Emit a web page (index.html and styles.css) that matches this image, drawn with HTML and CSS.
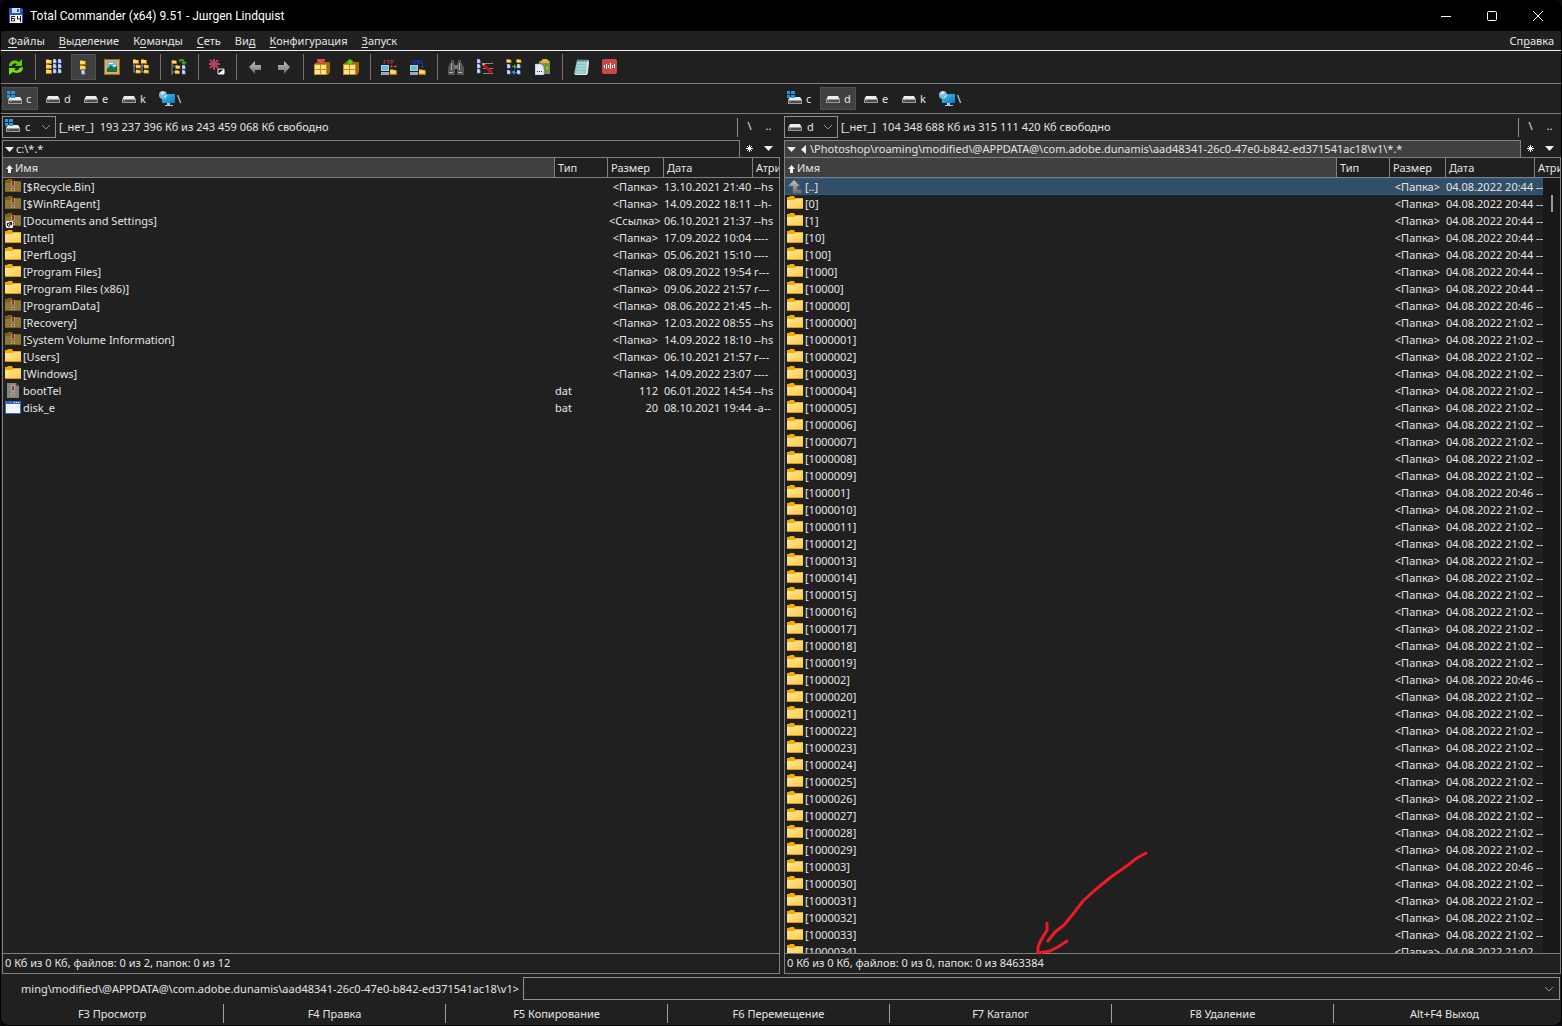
FILE: index.html
```html
<!DOCTYPE html>
<html lang="ru">

<head>
    <meta charset="UTF-8">
    <title>Total Commander (x64) 9.51</title>
    <link rel="stylesheet" href="styles.css">
</head>

<body>
    <!-- icon set -->
    <svg class="sprite" width="0" height="0">
        <defs>
            <linearGradient id="gFolder" x1="0" y1="0" x2="1" y2="1">
                <stop offset="0" stop-color="#ffe9a0" />
                <stop offset="1" stop-color="#ffc83c" />
            </linearGradient>
            <linearGradient id="gGrey" x1="0" y1="0" x2="0" y2="1">
                <stop offset="0" stop-color="#c4c4c4" />
                <stop offset="1" stop-color="#6a6a6a" />
            </linearGradient>
            <linearGradient id="gScreen" x1="0" y1="0" x2="1" y2="1">
                <stop offset="0" stop-color="#35c8f0" />
                <stop offset="1" stop-color="#0a78c0" />
            </linearGradient>
        </defs>
        <symbol id="folder" viewBox="0 0 16 16">
            <path d="M0 1h2l1-1h4l1 2h8v11H0z" fill="#f5ab00" />
            <path d="M0 4h7l2-1h7v10H0z" fill="url(#gFolder)" />
            <path d="M0 12h16v1H0z" fill="#d99a10" />
        </symbol>
        <symbol id="hidden" viewBox="0 0 16 16">
            <path d="M0 1h2l1-1h4l1 2h8v11H0z" fill="#82600f" />
            <path d="M0 4h7l2-1h7v9H0z" fill="#8d7838" />
            <path d="M6 2h4v5L9 8H7L6 7zM6 9h4v3H6z" fill="#a99a80" />
            <path d="M7 2h2v4L8 8 7 6zM7 10h2v1H7z" fill="#a02c22" />
        </symbol>
        <symbol id="link" viewBox="0 0 16 16">
            <use href="#hidden" />
            <path d="M1 8h7v7H1z" fill="#e4e4e4" />
            <path d="M2 13v-3h2v1H3v2zM4 9h3v3H6v-1l-2 3H3l2-4H4z" fill="#222" />
        </symbol>
        <symbol id="dat" viewBox="0 0 16 16">
            <path d="M2 0h9l3 3v12H2z" fill="#858585" />
            <path d="M11 0v3h3z" fill="#4b4b4b" />
            <path d="M6 2h4v5L9 9H7L6 7zM6 10h4v3H6z" fill="#b4a8a4" />
            <path d="M7 3h2v4L8 8 7 7zM7 11h2v1H7z" fill="#a02c2c" />
        </symbol>
        <symbol id="bat" viewBox="0 0 16 16">
            <path d="M0 1h16v13H0z" fill="#3668c8" />
            <path d="M1 4h14v9H1z" fill="#f4f7ff" />
            <path d="M9 2h1v1H9zM11 2h1v1h-1zM13 2h1v1h-1z" fill="#fff" />
        </symbol>
        <symbol id="up" viewBox="0 0 16 16">
            <path d="M7 1l6 6h-3v4h4v3H6V7H1z" fill="url(#gGrey)" stroke="#777" stroke-width=".5" />
        </symbol>
        <symbol id="drive" viewBox="0 0 16 16">
            <path d="M3 5h10l2 4H1z" fill="#ededed" />
            <path d="M1 8h14v4H1z" fill="#999" />
            <path d="M2 9h12v2H2z" fill="#4c4c4c" />
            <path d="M3 9h1v1H3z" fill="#3ae85a" />
        </symbol>
        <symbol id="sysdrive" viewBox="0 0 16 16">
            <path d="M3 6h10l2 3H1z" fill="#ededed" />
            <path d="M1 9h14v4H1z" fill="#999" />
            <path d="M2 10h12v2H2z" fill="#4c4c4c" />
            <path d="M3 10h1v1H3z" fill="#3ae85a" />
            <path d="M0 0h3v3H0zM4 0h4v3H4zM0 4h3v3H0zM4 4h4v3H4z" fill="#1e9be8" />
        </symbol>
        <symbol id="net" viewBox="0 0 18 18">
            <path d="M4 4h13v9H4z" fill="url(#gScreen)" />
            <path d="M9 13h3v2H9zM7 15h8v1H7z" fill="#b8c8d0" />
            <circle cx="5" cy="5" r="4" fill="#78b8dc" />
            <path d="M2 3l3-2 2 2-3 2zM6 6l3-1-2 3z" fill="#c8e6f4" />
        </symbol>
        <symbol id="floppy" viewBox="0 0 16 16">
            <path d="M1 0h13l1 1v14H1z" fill="#2358c4" />
            <path d="M4 0h8v5H4z" fill="#cfdcf2" />
            <path d="M9 1h2v3H9z" fill="#2358c4" />
            <path d="M2 7h12v8H2z" fill="#f4f4f4" />
            <path d="M7 8.500H3.500v4.500h3v-2.500h-3M9.500 8v3h3M12.500 8v6" fill="none" stroke="#222" />
        </symbol>
        <!-- blue document and small folder, building blocks of the toolbar -->
        <symbol id="doc" viewBox="0 0 5 6">
            <path d="M0 0h3l1 2v3H0z" fill="#cddaff" stroke="#6e8ae0" stroke-width=".7" />
        </symbol>
        <symbol id="fold" viewBox="0 0 6 5">
            <path d="M0 0h3v1h3v4H0z" fill="#b07c10" />
            <path d="M0 1h5v3H0z" fill="#ffd968" />
        </symbol>
        <symbol id="refresh" viewBox="0 0 16 16">
            <path d="M1 7c0-5 6-7 10-4l3-3v7H7l2-2C6 4 4 5 4 7z" fill="#5ccc0c" />
            <path d="M15 8c0 6-6 7-10 5l-4 3V9h7l-2 2c3 1 5 0 5-2z" fill="#79e010" />
        </symbol>
        <symbol id="brief" viewBox="0 0 16 16">
            <use href="#fold" x="0" y="0" width="6" height="5" />
            <use href="#fold" x="0" y="5" width="6" height="5" />
            <use href="#fold" x="0" y="10" width="6" height="5" />
            <use href="#doc" x="7" y="0" width="4" height="5" />
            <use href="#doc" x="7" y="5" width="4" height="5" />
            <use href="#doc" x="7" y="10" width="4" height="5" />
            <use href="#doc" x="12" y="0" width="4" height="5" />
            <use href="#doc" x="12" y="5" width="4" height="5" />
            <use href="#doc" x="12" y="10" width="4" height="5" />
        </symbol>
        <symbol id="full" viewBox="0 0 16 16">
            <use href="#fold" x="5" y="1" width="6" height="5" />
            <use href="#fold" x="5" y="6" width="6" height="5" />
            <use href="#doc" x="6" y="11" width="5" height="5" />
        </symbol>
        <symbol id="thumbs" viewBox="0 0 16 16">
            <path d="M0 0h16v16H0z" fill="#9a6c24" />
            <path d="M1 1h14v14H1z" fill="#dcae5c" />
            <path d="M3 3h10v10H3z" fill="#5fb8f0" />
            <path d="M3 10l4-4 3 3 3-2v6H3z" fill="#18703c" />
            <path d="M5 4h4v1H5zM9 6h3v1H9z" fill="#fff" />
        </symbol>
        <symbol id="tree" viewBox="0 0 16 16">
            <path d="M1 4v9h3M9 4v9h3M1 7h3M9 7h3" stroke="#999" fill="none" />
            <use href="#fold" x="0" y="0" width="6" height="5" />
            <use href="#fold" x="3" y="5" width="5" height="5" />
            <use href="#fold" x="3" y="10" width="5" height="5" />
            <use href="#fold" x="8" y="0" width="6" height="5" />
            <use href="#fold" x="11" y="5" width="5" height="5" />
            <use href="#fold" x="11" y="10" width="5" height="5" />
        </symbol>
        <symbol id="swap" viewBox="0 0 16 16">
            <path d="M1 1v15M1 7h3M1 13h3" stroke="#888" fill="none" />
            <use href="#fold" x="1" y="1" width="5" height="4" />
            <use href="#fold" x="4" y="6" width="6" height="4" />
            <use href="#fold" x="4" y="11" width="5" height="4" />
            <use href="#doc" x="11" y="6" width="4" height="5" />
            <use href="#doc" x="11" y="11" width="4" height="5" />
            <path d="M8 2c3-2 5-1 5 2" stroke="#38a820" stroke-width="2" fill="none" />
            <path d="M10 3h6l-3 3z" fill="#38a820" />
        </symbol>
        <symbol id="invert" viewBox="0 0 16 16">
            <path d="M5 0v11M0 5h11M1 1l8 8M9 1l-8 8" stroke="#b8405a" stroke-width="2" />
            <path d="M9 10h6v5H9z" fill="#111" stroke="#eee" />
            <path d="M15 10v5H9z" fill="#fff" />
        </symbol>
        <symbol id="back" viewBox="0 0 16 16">
            <path d="M2 8l6-6v4h6v5H8v4z" fill="url(#gGrey)" />
        </symbol>
        <symbol id="forward" viewBox="0 0 16 16">
            <path d="M14 8L8 2v4H2v5h6v4z" fill="url(#gGrey)" />
        </symbol>
        <symbol id="box" viewBox="0 0 16 16">
            <path d="M0 5l3-2h13v10l-2 3H0z" fill="#a06c08" />
            <path d="M0 5h13v11H0z" fill="#c88c18" />
            <path d="M1 6h5v4H1zM7 6h5v4H7zM1 11h5v4H1zM7 11h5v4H7z" fill="#ffe68c" />
        </symbol>
        <symbol id="pack" viewBox="0 0 16 16">
            <use href="#box" width="16" height="16" />
            <path d="M3 0h8v2L7 5 3 2z" fill="#e04858" />
        </symbol>
        <symbol id="unpack" viewBox="0 0 16 16">
            <use href="#box" width="16" height="16" />
            <path d="M7 0l4 3H9v2H5V3H3z" fill="#50d010" />
        </symbol>
        <symbol id="pc" viewBox="0 0 16 16">
            <path d="M0 6h8v6H0z" fill="#b8ccd8" />
            <path d="M1 7h6v4H1z" fill="#50c4ee" />
            <path d="M0 13h8v3H0z" fill="#a8a8c0" />
            <path d="M1 14h3v1H1z" fill="#4ad040" />
            <path d="M8 14h4" stroke="#a03030" />
            <use href="#fold" x="9" y="10" width="7" height="6" />
        </symbol>
        <symbol id="ftp" viewBox="0 0 16 16">
            <use href="#pc" width="16" height="16" />
            <text x="2" y="5" class="tiny" fill="#a83848">FTP</text>
            <path d="M9 7.500h7M10.500 6v3M14.500 6v3" stroke="#a83848" fill="none" />
        </symbol>
        <symbol id="url" viewBox="0 0 16 16">
            <use href="#pc" width="16" height="16" />
            <text x="2" y="5" class="tiny" fill="#1838c8">URL</text>
            <path d="M11 7.500h3M12.500 6v3" stroke="#1838c8" fill="none" />
        </symbol>
        <symbol id="find" viewBox="0 0 16 16">
            <path d="M3 1h3v3h1v12H0V9l2-5h1zM10 1h3v3h1l2 5v7H9V4h1z" fill="#555" />
            <path d="M3 4h1v7H3zM11 4h1v7h-1zM1 13h4v1H1zM10 13h4v1h-4z" fill="#b0b0b0" />
            <path d="M6 6h4v4H6z" fill="#777" />
        </symbol>
        <symbol id="rename" viewBox="0 0 16 16">
            <use href="#doc" x="0" y="0" width="4" height="5" />
            <use href="#doc" x="0" y="5" width="4" height="5" />
            <use href="#doc" x="0" y="10" width="4" height="5" />
            <path d="M6 4.500h10M6 9.500h10M6 14.500h10" stroke="#888" />
            <path d="M7 6l8 8" stroke="#c80c10" stroke-width="3" />
            <path d="M5 4l3 1-2 2z" fill="#f4d090" />
        </symbol>
        <symbol id="sync" viewBox="0 0 16 16">
            <use href="#fold" x="0" y="0" width="6" height="4" />
            <use href="#fold" x="10" y="0" width="6" height="4" />
            <use href="#doc" x="1" y="5" width="4" height="5" />
            <use href="#doc" x="1" y="11" width="4" height="5" />
            <use href="#doc" x="11" y="5" width="4" height="5" />
            <use href="#doc" x="11" y="11" width="4" height="5" />
            <path d="M6 7h2V5l3 3-3 2V8H6z" fill="#40b818" />
            <path d="M11 13H9v-2l-4 2 4 3v-2h2z" fill="#2888e0" />
        </symbol>
        <symbol id="clip" viewBox="0 0 16 16">
            <path d="M4 2h11v13H4z" fill="#94806c" />
            <path d="M6 2l2-2h4l2 2v2H6z" fill="#e4b420" />
            <path d="M0 5h6l3 3v8H0z" fill="#e8ecff" stroke="#8090d0" stroke-width=".5" />
            <path d="M2 12h1v1H2zM4 12h1v1H4zM6 12h1v1H6z" fill="#333" />
            <path d="M9 8h2V5l4 4-4 4v-3H9z" fill="#70d018" stroke="#348008" stroke-width=".5" />
        </symbol>
        <symbol id="notepad" viewBox="0 0 16 16">
            <path d="M4 1h12l-1 14H1z" fill="#8cc4cc" />
            <path d="M14 3h2l-2 13H2v-1h11z" fill="#f0e8d0" />
            <path d="M4 4h9M4 7h9M3 10h10M3 13h9" stroke="#b8e4ea" />
            <path d="M4 2h1V0M6 2h1V0M8 2h1V0M10 2h1V0M12 2h1V0" stroke="#50686c" fill="none" />
        </symbol>
        <symbol id="audio" viewBox="0 0 16 16">
            <rect width="15" height="15" rx="2" fill="#c84848" />
            <path d="M2.500 6v3M4.500 5v5M6.500 6v3M8.500 4v6M10.500 6v3M12.500 5v4" stroke="#fff" />
        </symbol>
    </svg>

    <div class="window">
        <header class="titlebar">
            <svg class="icon"><use href="#floppy" /></svg>
            <h1>Total Commander (x64) 9.51 - Jшrgen Lindquist</h1>
            <button type="button" class="sys" aria-label="Свернуть"><svg viewBox="0 0 10 10"><path d="M0 5.500h10" /></svg></button>
            <button type="button" class="sys" aria-label="Развернуть"><svg viewBox="0 0 10 10"><rect x=".5" y=".5" width="9" height="9" rx="1" /></svg></button>
            <button type="button" class="sys" aria-label="Закрыть"><svg viewBox="0 0 10 10"><path d="M0 0l10 10M10 0L0 10" /></svg></button>
        </header>

        <nav class="menu">
            <a href="#"><u>Ф</u>айлы</a>
            <a href="#"><u>В</u>ыделение</a>
            <a href="#">К<u>о</u>манды</a>
            <a href="#"><u>С</u>еть</a>
            <a href="#">Ви<u>д</u></a>
            <a href="#"><u>К</u>онфигурация</a>
            <a href="#"><u>З</u>апуск</a>
            <a href="#" class="help">Сп<u>р</u>авка</a>
        </nav>

        <div class="toolbar">
            <button type="button" aria-label="Обновить"><svg class="icon"><use href="#refresh" /></svg></button>
            <span class="sep"></span>
            <button type="button" aria-label="Краткий"><svg class="icon"><use href="#brief" /></svg></button>
            <button type="button" aria-label="Подробный" class="active"><svg class="icon"><use href="#full" /></svg></button>
            <button type="button" aria-label="Эскизы"><svg class="icon"><use href="#thumbs" /></svg></button>
            <button type="button" aria-label="Дерево"><svg class="icon"><use href="#tree" /></svg></button>
            <span class="sep"></span>
            <button type="button" aria-label="Без подкаталогов"><svg class="icon"><use href="#swap" /></svg></button>
            <span class="sep"></span>
            <button type="button" aria-label="Обратить выделение"><svg class="icon"><use href="#invert" /></svg></button>
            <span class="sep"></span>
            <button type="button" aria-label="Назад"><svg class="icon"><use href="#back" /></svg></button>
            <button type="button" aria-label="Вперёд"><svg class="icon"><use href="#forward" /></svg></button>
            <span class="sep"></span>
            <button type="button" aria-label="Упаковать"><svg class="icon"><use href="#pack" /></svg></button>
            <button type="button" aria-label="Распаковать"><svg class="icon"><use href="#unpack" /></svg></button>
            <span class="sep"></span>
            <button type="button" aria-label="FTP"><svg class="icon"><use href="#ftp" /></svg></button>
            <button type="button" aria-label="URL"><svg class="icon"><use href="#url" /></svg></button>
            <span class="sep"></span>
            <button type="button" aria-label="Поиск"><svg class="icon"><use href="#find" /></svg></button>
            <button type="button" aria-label="Переименование"><svg class="icon"><use href="#rename" /></svg></button>
            <button type="button" aria-label="Синхронизация"><svg class="icon"><use href="#sync" /></svg></button>
            <button type="button" aria-label="Копировать имена"><svg class="icon"><use href="#clip" /></svg></button>
            <span class="sep"></span>
            <button type="button" aria-label="Блокнот"><svg class="icon"><use href="#notepad" /></svg></button>
            <button type="button" aria-label="Звук"><svg class="icon"><use href="#audio" /></svg></button>
        </div>

        <div class="drives">
            <div class="driveGroup">
                <button type="button" class="active"><svg class="icon"><use href="#sysdrive" /></svg>c</button>
                <button type="button"><svg class="icon"><use href="#drive" /></svg>d</button>
                <button type="button"><svg class="icon"><use href="#drive" /></svg>e</button>
                <button type="button"><svg class="icon"><use href="#drive" /></svg>k</button>
                <button type="button" class="netButton"><svg class="net"><use href="#net" /></svg>\</button>
            </div>
            <div class="driveGroup">
                <button type="button"><svg class="icon"><use href="#sysdrive" /></svg>c</button>
                <button type="button" class="active"><svg class="icon"><use href="#drive" /></svg>d</button>
                <button type="button"><svg class="icon"><use href="#drive" /></svg>e</button>
                <button type="button"><svg class="icon"><use href="#drive" /></svg>k</button>
                <button type="button" class="netButton"><svg class="net"><use href="#net" /></svg>\</button>
            </div>
        </div>

        <main class="panels">
            <section class="panel">
                <div class="info">
                    <div class="combo">
                        <svg class="icon"><use href="#sysdrive" /></svg>
                        <select aria-label="Диск слева"><option>c</option></select>
                        <svg class="chevron" viewBox="0 0 8 8"><path d="M0 2l4 4 4-4" /></svg>
                    </div>
                    <span class="label">[_нет_]</span>
                    <span class="space">193 237 396 Кб из 243 459 068 Кб свободно</span>
                    <div class="side line"><button type="button">\</button><button type="button">..</button></div>
                </div>
                <div class="pathRow">
                    <div class="path"><svg class="tri" viewBox="0 0 9 5"><path d="M0 0h9L4.500 5z" /></svg><span>c:\*.*</span></div>
                    <div class="side">
                        <button type="button" aria-label="Избранное"><svg class="star" viewBox="0 0 7 7"><path d="M3.500 0v7M0 3.500h7M1 1l5 5M6 1L1 6" /></svg></button>
                        <button type="button" aria-label="История"><svg class="tri" viewBox="0 0 9 5"><path d="M0 0h9L4.500 5z" /></svg></button>
                    </div>
                </div>
                <div class="list">
                    <table>
                        <thead>
                            <tr>
                                <th class="name"><svg class="sort" viewBox="0 0 7 8"><path d="M3.500 0L7 4H5v4H2V4H0z" /></svg>Имя</th>
                                <th class="type">Тип</th>
                                <th class="size">Размер</th>
                                <th class="date">Дата</th>
                                <th class="attr">Атрибуты</th>
                            </tr>
                        </thead>
                        <tbody id="leftList"></tbody>
                    </table>
                </div>
                <div class="status">0 Кб из 0 Кб, файлов: 0 из 2, папок: 0 из 12</div>
            </section>

            <section class="panel right">
                <div class="info">
                    <div class="combo">
                        <svg class="icon"><use href="#drive" /></svg>
                        <select aria-label="Диск справа"><option>d</option></select>
                        <svg class="chevron" viewBox="0 0 8 8"><path d="M0 2l4 4 4-4" /></svg>
                    </div>
                    <span class="label">[_нет_]</span>
                    <span class="space">104 348 688 Кб из 315 111 420 Кб свободно</span>
                    <div class="side line"><button type="button">\</button><button type="button">..</button></div>
                </div>
                <div class="pathRow">
                    <div class="path current"><svg class="tri" viewBox="0 0 9 5"><path d="M0 0h9L4.500 5z" /></svg><svg class="triLeft" viewBox="0 0 5 9"><path d="M5 0v9L0 4.500z" /></svg><span>\Photoshop\roaming\modified\@APPDATA@\com.adobe.dunamis\aad48341-26c0-47e0-b842-ed371541ac18\v1\*.*</span></div>
                    <div class="side">
                        <button type="button" aria-label="Избранное"><svg class="star" viewBox="0 0 7 7"><path d="M3.500 0v7M0 3.500h7M1 1l5 5M6 1L1 6" /></svg></button>
                        <button type="button" aria-label="История"><svg class="tri" viewBox="0 0 9 5"><path d="M0 0h9L4.500 5z" /></svg></button>
                    </div>
                </div>
                <div class="list">
                    <table>
                        <thead>
                            <tr>
                                <th class="name"><svg class="sort" viewBox="0 0 7 8"><path d="M3.500 0L7 4H5v4H2V4H0z" /></svg>Имя</th>
                                <th class="type">Тип</th>
                                <th class="size">Размер</th>
                                <th class="date">Дата</th>
                                <th class="attr">Атрибуты</th>
                            </tr>
                        </thead>
                        <tbody id="rightList"></tbody>
                    </table>
                    <div class="scroll"><div class="thumb"></div></div>
                </div>
                <div class="status">0 Кб из 0 Кб, файлов: 0 из 0, папок: 0 из 8463384</div>
                <!-- hand drawn arrow over the folder counter -->
                <svg class="arrow" viewBox="0 0 114 104">
                    <path d="M111 2l-9 5-9 7-17 12-16 13-12 11-10 13-9 11-9 7-7 9" />
                    <path d="M12 72v7L5 91l-2 5v6l12-2 8-4 9-6" />
                </svg>
            </section>
        </main>

        <div class="command">
            <label for="cmd"><span>ming\modified\@APPDATA@\com.adobe.dunamis\aad48341-26c0-47e0-b842-ed371541ac18\v1&gt;</span></label>
            <div class="cmdBox">
                <input type="text" id="cmd">
                <button type="button" aria-label="История команд"><svg class="chevron" viewBox="0 0 8 8"><path d="M0 2l4 4 4-4" /></svg></button>
            </div>
        </div>

        <footer class="keys">
            <button type="button">F3 Просмотр</button>
            <button type="button">F4 Правка</button>
            <button type="button">F5 Копирование</button>
            <button type="button">F6 Перемещение</button>
            <button type="button">F7 Каталог</button>
            <button type="button">F8 Удаление</button>
            <button type="button">Alt+F4 Выход</button>
        </footer>
    </div>
    <script src="script.js"></script>
</body>

</html>
```
FILE: styles.css
```css
* {
    box-sizing: border-box;
}

body {
    margin: 0;
    height: 100vh;
    overflow: hidden;
    background-color: #0c0c12;
    color: #e4e4e4;
    font-family: "Noto Sans", "Open Sans", sans-serif;
    font-size: 11px;
    line-height: 16px;
}

button, input, select {
    margin: 0;
    padding: 0;
    border: 0;
    background: none;
    color: inherit;
    font: inherit;
}

svg {
    display: block;
    flex: none;
}

.sprite {
    position: absolute;
}

.icon {
    width: 16px;
    height: 16px;
}

.tiny {
    font-size: 6px;
    font-weight: bold;
}

.window {
    height: 100%;
    display: flex;
    flex-direction: column;
    background-color: #202020;
    border: solid #000;
    border-width: 0 1px 1px;
    border-radius: 8px;
    overflow: hidden;
}

/* title and menu */
.titlebar {
    display: flex;
    align-items: center;
    height: 31px;
    padding-left: 7px;
    background-color: #000;
    color: #fff;
}

.titlebar h1 {
    flex: 1;
    margin: 0 0 0 6px;
    font-family: Roboto, sans-serif;
    font-size: 12px;
    font-weight: normal;
}

.sys {
    width: 46px;
    height: 31px;
    display: grid;
    place-items: center;
}

.sys svg {
    width: 10px;
    height: 10px;
    overflow: visible;
    fill: none;
    stroke: #fff;
}

.menu {
    display: flex;
    align-items: center;
    gap: 14px;
    height: 20px;
    padding: 0 7px;
    border-bottom: 1px solid #f0f0f0;
}

.menu a {
    color: inherit;
    text-decoration: none;
}

.menu u {
    text-underline-offset: 2px;
}

.menu .help {
    margin-left: auto;
}

/* toolbar */
.toolbar {
    display: flex;
    align-items: center;
    height: 33px;
    padding-left: 1px;
    border-bottom: 1px solid #808080;
}

.toolbar button {
    display: flex;
    align-items: center;
    width: 25px;
    height: 26px;
    margin: 0 2px;
    padding-left: 4px;
}

.toolbar .active, .driveGroup .active {
    background-color: #404040;
    box-shadow: inset 0 0 0 1px #505050;
}

.sep {
    width: 1px;
    height: 26px;
    margin: 0 4px;
    background-color: #707070;
}

/* drive buttons */
.drives {
    display: grid;
    grid-template-columns: 1fr 1fr;
    height: 30px;
    border-bottom: 1px solid #808080;
}

.driveGroup {
    display: flex;
    align-items: center;
    gap: 2px;
    padding-left: 1px;
}

.driveGroup button {
    display: flex;
    align-items: center;
    gap: 3px;
    width: 36px;
    height: 23px;
    padding-left: 5px;
}

.driveGroup .netButton {
    gap: 1px;
    padding-left: 4px;
}

.net {
    width: 18px;
    height: 18px;
}

/* file panels */
.panels {
    flex: 1;
    min-height: 0;
    display: grid;
    grid-template-columns: minmax(0, 1fr) minmax(0, 1fr);
}

.panel {
    position: relative;
    min-height: 0;
    display: flex;
    flex-direction: column;
    padding: 0 1px;
}

.right {
    padding: 0 0 0 3px;
}

.info {
    display: flex;
    align-items: center;
    height: 26px;
}

.combo {
    display: flex;
    align-items: center;
    width: 54px;
    height: 22px;
    padding: 0 5px 0 2px;
    border: 1px solid #909090;
}

.combo select {
    flex: 1;
    min-width: 0;
    padding-left: 4px;
    appearance: none;
}

.chevron {
    width: 8px;
    height: 8px;
    fill: none;
    stroke: #909090;
}

.label {
    margin: 0 6px 0 3px;
}

.side {
    display: flex;
    width: 40px;
}

.side button {
    display: grid;
    place-items: center;
    width: 19px;
    height: 17px;
}

.line {
    width: 43px;
    height: 19px;
    margin-left: auto;
    padding-left: 2px;
    border-left: 1px solid #909090;
}

.pathRow {
    display: flex;
    height: 17px;
}

.path {
    flex: 1;
    min-width: 0;
    display: flex;
    align-items: center;
    gap: 2px;
    padding-left: 2px;
    border: solid #808080;
    border-width: 1px 1px 0;
    white-space: nowrap;
    overflow: hidden;
}

.current, th.name {
    background-color: #404040;
}

.tri {
    width: 9px;
    height: 5px;
    fill: #f0f0f0;
}

.triLeft {
    width: 5px;
    height: 9px;
    margin: 0 2px 0 3px;
    fill: #f0f0f0;
}

.star {
    width: 7px;
    height: 7px;
    stroke: #f0f0f0;
}

.list {
    position: relative;
    flex: 1;
    min-height: 0;
    overflow: hidden;
    border: solid #808080;
    border-width: 1px 1px 0;
}

table {
    width: 100%;
    table-layout: fixed;
    border-collapse: separate;
    border-spacing: 0;
    white-space: nowrap;
}

th {
    height: 20px;
    padding: 0 0 0 3px;
    border: solid #808080;
    border-width: 0 1px 1px 0;
    font-weight: normal;
    text-align: left;
    overflow: hidden;
}

th.attr {
    border-right: 0;
}

.type {
    width: 53px;
}

.size {
    width: 56px;
}

.date {
    width: 89px;
}

.attr {
    width: 26px;
}

.right .attr {
    width: 25px;
}

.sort {
    display: inline-block;
    width: 7px;
    height: 8px;
    margin-right: 2px;
    vertical-align: -1px;
    fill: #f0f0f0;
}

td {
    height: 17px;
    padding: 0;
}

td.name {
    overflow: hidden;
}

td.name div {
    display: flex;
    align-items: center;
    gap: 2px;
    height: 17px;
    padding-left: 2px;
}

td.size {
    padding: 0 6px 0 1px;
    text-align: right;
}

td.attr {
    padding-left: 1px;
}

.selected td {
    background-color: #334f67;
    box-shadow: inset 0 1px #265c8c, inset 0 -1px #265c8c;
}

.scroll {
    position: absolute;
    top: 20px;
    right: 0;
    bottom: 0;
    width: 17px;
    padding: 17px 0 0 8px;
    background-color: #181818;
}

.thumb {
    width: 2px;
    height: 17px;
    background-color: #9a9a9a;
}

.status {
    height: 21px;
    padding: 1px 2px;
    border: 1px solid #808080;
}

.arrow {
    position: absolute;
    left: 254px;
    bottom: 19px;
    width: 114px;
    height: 104px;
    fill: none;
    stroke: #ed1c24;
    stroke-width: 3;
    stroke-linecap: round;
    stroke-linejoin: round;
}

/* command line and function keys */
.command {
    display: flex;
    align-items: center;
    height: 29px;
}

.command label {
    width: 522px;
    padding-right: 4px;
    display: flex;
    justify-content: flex-end;
    overflow: hidden;
    white-space: nowrap;
}

.cmdBox {
    flex: 1;
    display: flex;
    height: 23px;
    margin-right: 1px;
    border: 1px solid #909090;
}

.cmdBox input {
    flex: 1;
    min-width: 0;
    padding: 0 4px;
    outline: 0;
}

.cmdBox button {
    width: 20px;
    display: grid;
    place-items: center;
}

.keys {
    display: grid;
    grid-template-columns: repeat(7, 1fr);
    height: 22px;
    padding: 1px 6px 2px 0;
}

.keys button + button {
    border-left: 1px solid #a0a0a0;
}
```
FILE: script.js
```js
// name, type, size, date, attributes, icon
var leftFiles = [
    ["[$Recycle.Bin]", "", "<Папка>", "13.10.2021 21:40", "--hs", "hidden"],
    ["[$WinREAgent]", "", "<Папка>", "14.09.2022 18:11", "--h-", "hidden"],
    ["[Documents and Settings]", "", "<Ссылка>", "06.10.2021 21:37", "--hs", "link"],
    ["[Intel]", "", "<Папка>", "17.09.2022 10:04", "----", "folder"],
    ["[PerfLogs]", "", "<Папка>", "05.06.2021 15:10", "----", "folder"],
    ["[Program Files]", "", "<Папка>", "08.09.2022 19:54", "r---", "folder"],
    ["[Program Files (x86)]", "", "<Папка>", "09.06.2022 21:57", "r---", "folder"],
    ["[ProgramData]", "", "<Папка>", "08.06.2022 21:45", "--h-", "hidden"],
    ["[Recovery]", "", "<Папка>", "12.03.2022 08:55", "--hs", "hidden"],
    ["[System Volume Information]", "", "<Папка>", "14.09.2022 18:10", "--hs", "hidden"],
    ["[Users]", "", "<Папка>", "06.10.2021 21:57", "r---", "folder"],
    ["[Windows]", "", "<Папка>", "14.09.2022 23:07", "----", "folder"],
    ["bootTel", "dat", "112", "06.01.2022 14:54", "--hs", "dat"],
    ["disk_e", "bat", "20", "08.10.2021 19:44", "-a--", "bat"]
];

var folder = (name, time) => ["[" + name + "]", "", "<Папка>", "04.08.2022 " + time, "----", name == ".." ? "up" : "folder"];

// folders are sorted as text, so 1000009 goes before 100001
var rightFiles = ["..", "0", "1", "10", "100", "1000", "10000"].map(n => folder(n, "20:44"));
for (var i = 0; i < 4; i++) {
    rightFiles.push(folder(100000 + i, "20:46"));
    for (var j = 0; j < 10 && i * 10 + j < 35; j++) {
        rightFiles.push(folder(1000000 + i * 10 + j, "21:02"));
    }
}

function fill(id, files) {
    var columns = ["name", "type", "size", "date", "attr"];
    files.forEach(file => {
        var row = document.getElementById(id).insertRow();
        columns.forEach((column, n) => {
            var cell = row.insertCell();
            cell.className = column;
            if (column == "name") {
                cell.innerHTML = '<div><svg class="icon"><use href="#' + file[5] + '" /></svg><span></span></div>';
                cell.querySelector("span").textContent = file[n];
            } else {
                cell.textContent = file[n];
            }
        });
    });
}

fill("leftList", leftFiles);
fill("rightList", rightFiles);
document.getElementById("rightList").rows[0].className = "selected";
```
